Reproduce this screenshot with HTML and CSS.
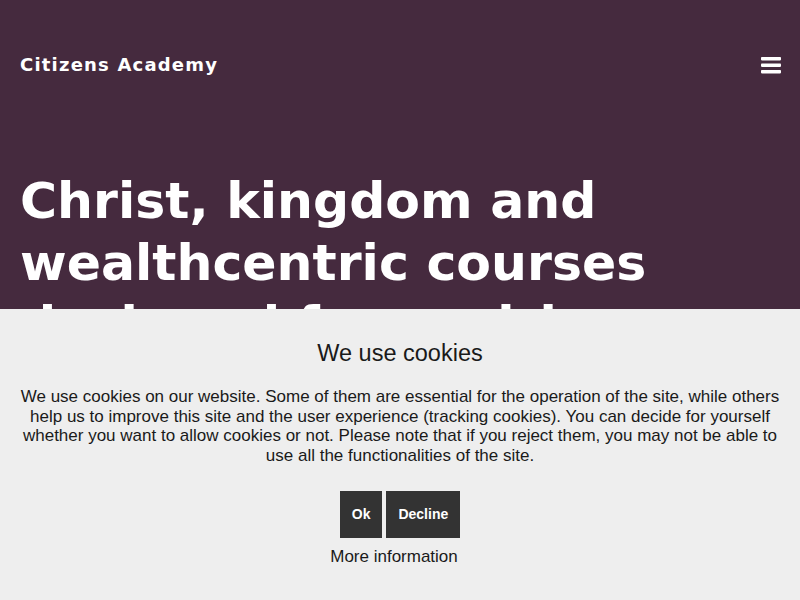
FILE: index.html
```html
<!DOCTYPE html>
<html lang="en">
<head>
<meta charset="utf-8">
<title>Citizens Academy</title>
<link rel="stylesheet" href="styles.css">
</head>
<body>
<div class="hero">
  <header class="topbar">
    <a class="brand" href="#">Citizens Academy</a>
    <button class="menu" aria-label="Menu">
      <svg width="20" height="17" viewBox="0 0 20 17"><rect x="0" y="0" width="20" height="3.4" rx="0.8" fill="#fff"/><rect x="0" y="6.5" width="20" height="3.4" rx="0.8" fill="#fff"/><rect x="0" y="13" width="20" height="3.4" rx="0.8" fill="#fff"/></svg>
    </button>
  </header>
  <h1 class="headline">Christ, kingdom and wealthcentric courses designed for aspiring minds</h1>
</div>
<div class="cookies">
  <h2 class="cookies-title">We use cookies</h2>
  <p class="cookies-text">We use cookies on our website. Some of them are essential for the operation of the site, while others help us to improve this site and the user experience (tracking cookies). You can decide for yourself whether you want to allow cookies or not. Please note that if you reject them, you may not be able to use all the functionalities of the site.</p>
  <div class="cookies-actions">
    <button class="btn">Ok</button>
    <button class="btn">Decline</button>
  </div>
  <a class="more" href="#">More information</a>
</div>
</body>
</html>
```
FILE: styles.css
```css
html, body { margin: 0; padding: 0; }
body {
  font-family: "Liberation Sans", Arial, sans-serif;
  background: #452a3e;
  height: 600px;
  overflow: hidden;
}
.hero {
  background: #452a3e;
  height: 600px;
  color: #fff;
}
.topbar {
  display: flex;
  justify-content: space-between;
  align-items: center;
  padding: 50px 19px 0 20px;
  height: 28px;
}
.brand {
  color: #fff;
  text-decoration: none;
  font-family: "DejaVu Sans", sans-serif;
  font-weight: 600;
  font-size: 18px;
  letter-spacing: 1.2px;
}
.menu {
  background: none;
  border: 0;
  padding: 0;
  display: flex;
  margin-top: 2px;
}
.headline {
  margin: 92px 20px 0 20px;
  font-family: "DejaVu Sans", sans-serif;
  font-weight: 700;
  font-size: 50.5px;
  line-height: 62px;
  color: #fff;
}
.cookies {
  position: fixed;
  left: 0;
  right: 0;
  bottom: 0;
  height: 291px;
  background: #eeeeee;
  color: #1a1a1a;
  text-align: center;
  padding: 0 18px;
  box-sizing: border-box;
}
.cookies-title {
  margin: 30px 0 0;
  font-weight: 400;
  font-size: 23.5px;
  line-height: 28px;
}
.cookies-text {
  margin: 20px 0 0;
  font-size: 17px;
  line-height: 19.7px;
}
.cookies-actions {
  display: flex;
  justify-content: center;
  gap: 4px;
  margin-top: 25px;
}
.btn {
  background: #333;
  color: #fff;
  border: 0;
  height: 47px;
  padding: 0 12px;
  font-family: inherit;
  font-weight: 700;
  font-size: 14px;
}
.more {
  display: block;
  margin-top: 9px;
  padding-right: 12px;
  color: #1a1a1a;
  text-decoration: none;
  font-size: 17px;
  line-height: 20px;
}
```
